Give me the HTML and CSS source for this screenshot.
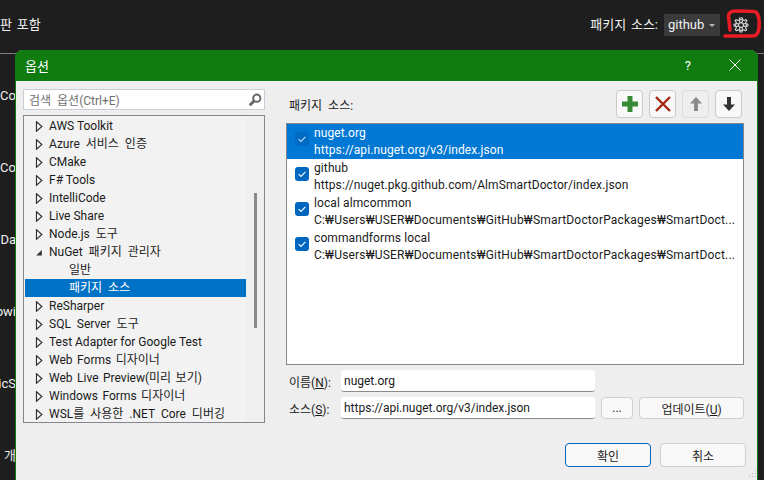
FILE: index.html
```html
<!DOCTYPE html>
<html lang="ko">
<head>
  <meta charset="UTF-8">
  <title>옵션</title>
  <link rel="stylesheet" href="styles.css">
</head>
<body>
  <svg class="defs" width="0" height="0">
    <symbol id="closed" viewBox="0 0 8 11"><path d="M1.5 .8 L6.8 5.5 L1.5 10.2 Z" fill="#fff" stroke="#333" stroke-width="1.2"/></symbol>
    <symbol id="open" viewBox="0 0 8 11"><path d="M6.8 3 V8.5 H1.2 Z" fill="#333"/></symbol>
    <symbol id="check" viewBox="0 0 14 14"><rect width="14" height="14" rx="3" fill="#0067c0"/><path d="M3.6 7.2 L6 9.4 L10.4 4.9" fill="none" stroke="#fff" stroke-width="1.1"/></symbol>
  </svg>

  <header class="topbar">
    <span class="topbar-left ko-tight">판 포함</span>
    <div class="topbar-right">
      <span class="ko-tight">패키지 소스:</span>
      <div class="source-select">github <span class="caret"></span></div>
      <div class="gear-wrap">
        <svg class="gear" width="16" height="16" viewBox="0 0 16 16" fill="none" stroke="#d8d8d8" stroke-width="1.1">
          <circle cx="8" cy="8" r="2.4"/>
          <path d="M6.6 1 H9.4 L9.9 3 L11.300 3.600 L13 2.500 L14 3.900 L12.600 5.400 L13 6.800 L15 7.200 V9 L13 9.400 L12.500 10.800 L13.700 12.500 L12.400 13.800 L10.700 12.700 L9.400 13.200 L9 15 H7 L6.600 13.200 L5.200 12.700 L3.500 13.800 L2.200 12.500 L3.400 10.800 L2.900 9.400 L1 9 V7.200 L3 6.800 L3.400 5.400 L2 3.900 L3 2.500 L4.700 3.600 L6.100 3 Z" stroke-linejoin="round"/>
          <circle cx="8" cy="4" r="1.500"/>
          <circle cx="8" cy="12" r="1.500"/>
          <circle cx="4" cy="8" r="1.500"/>
          <circle cx="12" cy="8" r="1.500"/>
        </svg>
        <svg class="scribble" width="40" height="32" viewBox="0 0 40 32" fill="none" stroke="#e81c24" stroke-width="3.600" stroke-linecap="round" stroke-linejoin="round">
          <path d="M2 28 H30 Q35 28 36 20 Q37 8 33 4 Q31 3 12 3 Q6 3 5.500 8 L7 22"/>
        </svg>
      </div>
    </div>
  </header>

  <div class="side-text">
    <div class="side-row"><span>nCo</span></div>
    <div class="side-row"><span>.Co</span></div>
    <div class="side-row"><span>.Da</span></div>
    <div class="side-row"><span>owi</span></div>
    <div class="side-row"><span>icS</span></div>
    <div class="side-row"><span>개</span></div>
  </div>

  <section class="dialog">
    <div class="titlebar">
      <span class="title-text">옵션</span>
      <div class="title-buttons">
        <span class="help">?</span>
        <svg width="12" height="12" viewBox="0 0 12 12" stroke="#fff" stroke-width="1"><path d="M.5 .5 L11.500 11.500 M11.500 .5 L.5 11.500"/></svg>
      </div>
    </div>

    <div class="dialog-body">
      <div class="left-col">
        <div class="search">
          <span><span class="ko">검색 옵션</span>(Ctrl+E)</span>
          <svg width="14" height="14" viewBox="0 0 14 14" fill="none" stroke="#666"><circle cx="8.800" cy="5.200" r="3.600" stroke-width="2"/><path d="M6 8 L1.800 12.200" stroke-width="3"/></svg>
        </div>
        <div class="tree">
          <ul class="tree-rows">
            <li><svg class="tw"><use href="#closed"/></svg>AWS Toolkit</li>
            <li class="ko"><svg class="tw"><use href="#closed"/></svg>Azure 서비스 인증</li>
            <li><svg class="tw"><use href="#closed"/></svg>CMake</li>
            <li><svg class="tw"><use href="#closed"/></svg>F# Tools</li>
            <li><svg class="tw"><use href="#closed"/></svg>IntelliCode</li>
            <li><svg class="tw"><use href="#closed"/></svg>Live Share</li>
            <li class="ko"><svg class="tw"><use href="#closed"/></svg>Node.js 도구</li>
            <li class="ko"><svg class="tw"><use href="#open"/></svg>NuGet 패키지 관리자</li>
            <li class="child">일반</li>
            <li class="child selected ko">패키지 소스</li>
            <li><svg class="tw"><use href="#closed"/></svg>ReSharper</li>
            <li class="ko"><svg class="tw"><use href="#closed"/></svg>SQL Server 도구</li>
            <li><svg class="tw"><use href="#closed"/></svg>Test Adapter for Google Test</li>
            <li class="ko-tight"><svg class="tw"><use href="#closed"/></svg>Web Forms 디자이너</li>
            <li class="ko-tight"><svg class="tw"><use href="#closed"/></svg>Web Live Preview(미리 보기)</li>
            <li class="ko-tight"><svg class="tw"><use href="#closed"/></svg>Windows Forms 디자이너</li>
            <li class="ko"><svg class="tw"><use href="#closed"/></svg>WSL를 사용한 .NET Core 디버깅</li>
          </ul>
          <div class="scroll-track"><div class="scroll-thumb"></div></div>
        </div>
      </div>

      <div class="right-col">
        <div class="toolbar-row">
          <span class="ko">패키지 소스:</span>
          <div class="toolbar">
            <button class="tool">
              <svg width="18" height="18" viewBox="0 0 18 18"><path d="M6.500 1 H11.500 V6.500 H17 V11.500 H11.500 V17 H6.500 V11.500 H1 V6.500 H6.500 Z" fill="#388a34"/></svg>
            </button>
            <button class="tool">
              <svg width="18" height="18" viewBox="0 0 18 18" stroke="#a1260d" stroke-width="2.400"><path d="M2 2 L16 16 M16 2 L2 16"/></svg>
            </button>
            <button class="tool off">
              <svg width="16" height="16" viewBox="0 0 16 16"><path d="M8 1 L14 7.500 H10 V15 H6 V7.500 H2 Z" fill="#8a8a8a"/></svg>
            </button>
            <button class="tool">
              <svg width="16" height="16" viewBox="0 0 16 16"><path d="M8 15 L14 8.500 H10 V1 H6 V8.500 H2 Z" fill="#333"/></svg>
            </button>
          </div>
        </div>

        <div class="source-list">
          <div class="source active">
            <svg class="check"><use href="#check"/></svg>
            <div class="source-text">nuget.org<br>https://api.nuget.org/v3/index.json</div>
          </div>
          <div class="source">
            <svg class="check"><use href="#check"/></svg>
            <div class="source-text">github<br>https://nuget.pkg.github.com/AlmSmartDoctor/index.json</div>
          </div>
          <div class="source">
            <svg class="check"><use href="#check"/></svg>
            <div class="source-text">local almcommon<br><span class="path">C:₩Users₩USER₩Documents₩GitHub₩SmartDoctorPackages₩SmartDoct...</span></div>
          </div>
          <div class="source">
            <svg class="check"><use href="#check"/></svg>
            <div class="source-text">commandforms local<br><span class="path">C:₩Users₩USER₩Documents₩GitHub₩SmartDoctorPackages₩SmartDoct...</span></div>
          </div>
        </div>

        <div class="form-row">
          <label>이름(<u>N</u>):</label>
          <div class="field">nuget.org</div>
        </div>
        <div class="form-row second">
          <label>소스(<u>S</u>):</label>
          <div class="field">https://api.nuget.org/v3/index.json</div>
          <button class="btn dots">...</button>
          <button class="btn update">업데이트(<u>U</u>)</button>
        </div>

        <div class="actions">
          <button class="btn wide primary">확인</button>
          <button class="btn wide">취소</button>
        </div>
      </div>
    </div>
    <svg class="grip" width="8" height="8" viewBox="0 0 8 8" fill="#b5b5b5"><rect x="6" y="0" width="1" height="1"/><rect x="3" y="3" width="1" height="1"/><rect x="6" y="3" width="1" height="1"/><rect x="0" y="6" width="1" height="1"/><rect x="3" y="6" width="1" height="1"/><rect x="6" y="6" width="1" height="1"/></svg>
  </section>
</body>
</html>
```

FILE: styles.css
```css
* {
  box-sizing: border-box;
}
html, body {
  height: 100%;
}
body {
  margin: 0;
  overflow: hidden;
  background-color: #1e1e1e;
  color: #f1f1f1;
  font-family: Roboto, "Noto Sans CJK KR", sans-serif;
  font-size: 12px;
}
.defs {
  position: absolute;
}
.ko {
  word-spacing: 3px;
}
.ko-tight {
  word-spacing: 1.5px;
}
button {
  font: inherit;
  color: #1b1b1b;
  padding: 0;
}

/* dark window behind the dialog */
.topbar {
  height: 54px;
  display: flex;
  justify-content: space-between;
  padding-top: 14px;
  border-bottom: 1px solid #7d7d7d;
  font-size: 13px;
}
.topbar-right {
  display: flex;
  align-items: flex-start;
  height: 22px;
  line-height: 22px;
}
.source-select {
  width: 56px;
  height: 22px;
  margin-left: 6px;
  padding-left: 4px;
  background-color: #3a3a3a;
  position: relative;
}
.caret {
  position: absolute;
  right: 5px;
  top: 10px;
  border: 3px solid transparent;
  border-top-color: #b5b5b5;
}
.gear-wrap {
  width: 44px;
  position: relative;
  display: flex;
  justify-content: center;
  padding: 3px 3px 0 0;
}
.scribble {
  position: absolute;
  left: 3px;
  top: -6px;
}
.side-text {
  width: 15px;
  overflow: hidden;
  padding-top: 6px;
  font-size: 13px;
}
.side-row {
  height: 72px;
  line-height: 72px;
  display: flex;
  justify-content: flex-end;
  white-space: nowrap;
}
.side-row span {
  margin-right: -1px;
}

/* options dialog */
.dialog {
  position: absolute;
  left: 15px;
  top: 50px;
  width: 743px;
  height: 440px;
  background-color: #eeeeee;
  border-left: 1px solid #107c10;
  border-right: 1px solid #107c10;
  border-radius: 8px 8px 0 0;
  color: #1b1b1b;
}
.titlebar {
  height: 31px;
  margin: 0 -1px;
  padding: 0 0 1px 10px;
  background-color: #107c10;
  border-radius: 8px 8px 0 0;
  color: #fff;
  font-size: 13px;
  display: flex;
  align-items: center;
  justify-content: space-between;
}
.title-buttons {
  display: flex;
  align-items: center;
  gap: 38px;
  padding-right: 17px;
}
.dialog-body {
  display: flex;
  gap: 21px;
  padding: 8px 13px 0 7px;
}
.left-col {
  width: 242px;
}
.search {
  height: 21px;
  padding: 0 2px 0 5px;
  background-color: #fff;
  border: 1px solid #ccccd8;
  color: #6f6f6f;
  display: flex;
  align-items: center;
  justify-content: space-between;
}
.tree {
  height: 308px;
  margin-top: 5px;
  background-color: #f2f2f2;
  border: 1px solid #85858b;
  display: flex;
  overflow: hidden;
}
.tree-rows {
  list-style: none;
  margin: 0;
  padding: 1px 0 0 1px;
  width: 222px;
  flex: none;
}
.tree-rows li {
  height: 18px;
  line-height: 18px;
  padding-left: 10px;
  display: flex;
  align-items: center;
  white-space: pre;
}
.tree-rows li.child {
  padding-left: 44px;
}
.tree-rows li.selected {
  background-color: #0072c6;
  color: #fff;
}
.tw {
  width: 8px;
  height: 11px;
  margin-right: 6px;
  flex: none;
}
.scroll-track {
  flex: 1;
  background-color: #efefef;
  padding: 77px 0 0 8px;
}
.scroll-thumb {
  width: 3px;
  height: 135px;
  background-color: #8a8a8a;
}
.right-col {
  width: 458px;
}
.toolbar-row {
  height: 28px;
  margin-top: 1px;
  padding-left: 3px;
  display: flex;
  justify-content: space-between;
  align-items: center;
}
.toolbar {
  display: flex;
  gap: 6px;
  margin-right: 2px;
}
.tool {
  width: 27px;
  height: 28px;
  background-color: #f8f8f8;
  border: 1px solid #c9c9c9;
  border-radius: 4px;
  display: flex;
  align-items: center;
  justify-content: center;
}
.tool.off {
  background-color: #eeeeee;
  border-color: #dcdcdc;
}
.source-list {
  height: 242px;
  margin-top: 5px;
  background-color: #fff;
  border: 1px solid #85858b;
}
.source {
  height: 35px;
  line-height: 17px;
  padding-left: 8px;
  display: flex;
  align-items: flex-start;
  gap: 5px;
  white-space: nowrap;
}
.source.active {
  background-color: #0078d4;
  color: #fff;
}
.source.active .check {
  opacity: .75;
}
.source-text {
  padding-top: 1px;
  letter-spacing: .1px;
}
.path {
  letter-spacing: .19px;
}
.check {
  width: 14px;
  height: 14px;
  margin-top: 8px;
  flex: none;
}
.form-row {
  display: flex;
  align-items: center;
  margin-top: 5px;
  height: 22px;
}
.form-row label {
  width: 55px;
  padding-left: 3px;
}
.field {
  width: 254px;
  height: 22px;
  line-height: 22px;
  padding-left: 3px;
  background-color: #fff;
  border-bottom: 1px solid #8a8a8a;
  border-radius: 3px;
}
.btn {
  height: 22px;
  background-color: #f8f8f8;
  border: 1px solid #cfcfcf;
  border-radius: 4px;
}
.dots {
  width: 32px;
  margin-left: 6px;
}
.update {
  width: 105px;
  margin-left: 6px;
}
.actions {
  display: flex;
  justify-content: flex-end;
  gap: 9px;
  margin: 24px -2px 0 0;
}
.wide {
  width: 86px;
  height: 24px;
}
.primary {
  border-color: #0067c0;
}
.grip {
  position: absolute;
  right: 0;
  bottom: 12px;
}
```
